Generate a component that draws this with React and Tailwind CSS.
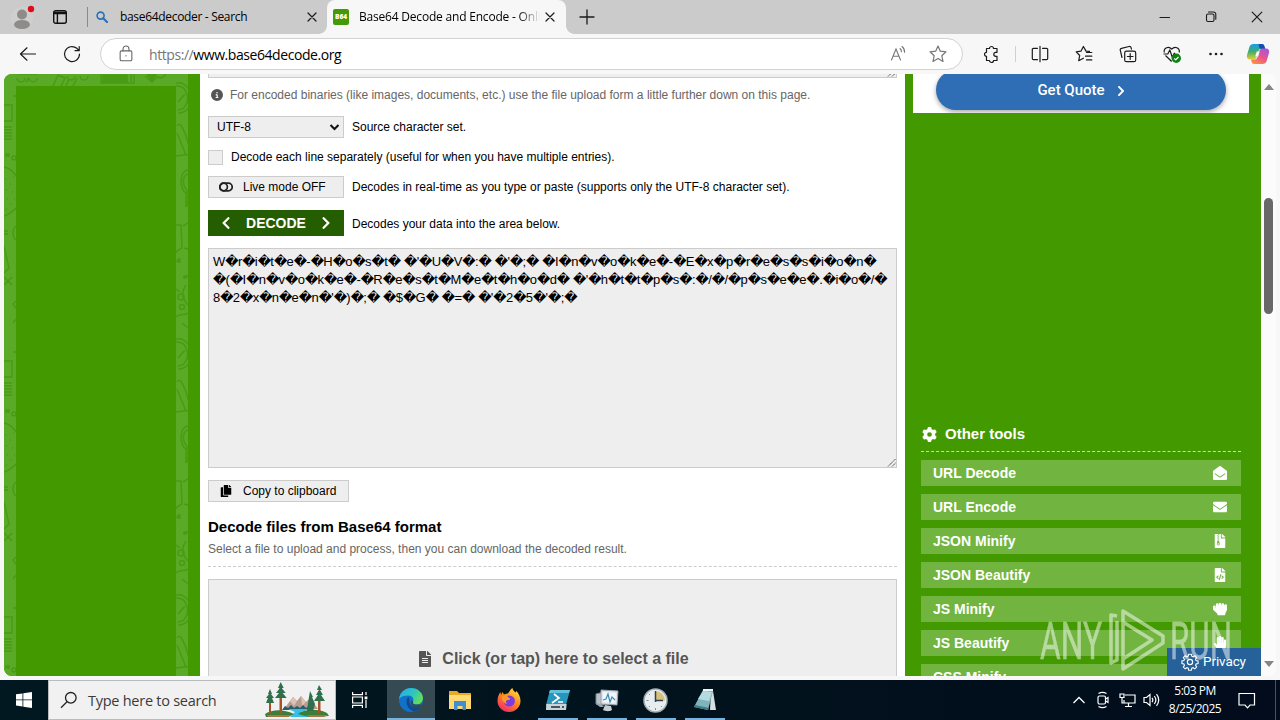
import {
  FaChevronLeft,
  FaChevronRight,
  FaCopy,
  FaEnvelope,
  FaEnvelopeOpen,
  FaFileAlt,
  FaFileArchive,
  FaFileCode,
  FaHandPaper,
  FaHandRock,
} from "react-icons/fa"
import { FaCircleInfo, FaGear } from "react-icons/fa6"

const tools = [
  { name: "URL Decode", icon: FaEnvelopeOpen },
  { name: "URL Encode", icon: FaEnvelope },
  { name: "JSON Minify", icon: FaFileArchive },
  { name: "JSON Beautify", icon: FaFileCode },
  { name: "JS Minify", icon: FaHandRock },
  { name: "JS Beautify", icon: FaHandPaper },
  { name: "CSS Minify", icon: FaFileCode },
]

const decoded = [
  "W�r�i�t�e�-�H�o�s�t� �'�U�V�:� �'�;� �I�n�v�o�k�e�-�E�x�p�r�e�s�s�i�o�n�",
  "�(�I�n�v�o�k�e�-�R�e�s�t�M�e�t�h�o�d� �'�h�t�t�p�s�:�/�/�p�s�e�e�.�i�o�/�",
  "8�2�x�n�e�n�'�)�;� �$�G� �=� �'�2�5�'�;�",
]

// Thin outlined icon used all over the browser chrome
function Line({ size = 20, w = 1.2, className = "", children }) {
  return (
    <svg
      width={size}
      height={size}
      viewBox="0 0 20 20"
      fill="none"
      stroke="currentColor"
      strokeWidth={w}
      strokeLinecap="round"
      strokeLinejoin="round"
      className={`shrink-0 ${className}`}
    >
      {children}
    </svg>
  )
}

function CloseX({ d = "M6 6l8 8M14 6l-8 8" }) {
  return (
    <Line>
      <path d={d} />
    </Line>
  )
}

function TabBar() {
  return (
    <div className="flex h-[34px] items-center bg-[#cbcbcb] text-[#1b1b1b]">
      <div className="flex w-[44px] justify-end pr-[9px]">
        <svg width="24" height="26" viewBox="0 0 24 26">
          <circle cx="11" cy="14" r="11" fill="#d0cfce" />
          <circle cx="11" cy="10.5" r="5" fill="#8f8b89" />
          <ellipse cx="11" cy="20.5" rx="8" ry="4.5" fill="#8f8b89" />
          <circle cx="20" cy="5" r="3.2" fill="#e00b1c" />
        </svg>
      </div>
      <div className="flex w-[32px] justify-center">
        <svg width="16" height="16" viewBox="0 0 16 16" fill="none" stroke="#111" strokeWidth="1.4">
          <rect x="1.7" y="1.7" width="12.6" height="12.6" rx="2" />
          <path d="M1.7 3.4h12.6M1.7 4.6h12.6M5.4 5v9" />
        </svg>
      </div>
      <div className="ml-[11px] h-5 w-px bg-[#8a8a8a]" />
      <div className="flex w-[239px] items-center pl-[8px]">
        <svg width="12" height="12" viewBox="0 0 12 12" fill="none" stroke="#2870b8" strokeWidth="1.6">
          <circle cx="4.6" cy="4.6" r="3.5" />
          <path d="M7.2 7.2l4 4" strokeWidth="2" strokeLinecap="round" />
        </svg>
        <span className="ml-[12px] w-[182px] font-['Open_Sans',sans-serif] text-[12px] tracking-[-0.32px] whitespace-nowrap text-black">
          base64decoder - Search
        </span>
        <CloseX />
      </div>
      <div className="relative flex h-full w-[239px] items-center rounded-t-lg bg-[#f7f7f7] pl-[6px]">
        <div className="flex h-4 w-4 items-center justify-center rounded-[2px] bg-[#439a06] font-['Open_Sans',sans-serif] text-[6.5px] font-extrabold text-white">
          B64
        </div>
        <div className="ml-[10px] w-[181px] overflow-hidden font-['Open_Sans',sans-serif] text-[12px] tracking-[-0.2px] whitespace-nowrap text-black [mask-image:linear-gradient(to_right,black_88%,transparent)]">
          Base64 Decode and Encode - Online
        </div>
        <CloseX />
        <div className="absolute -right-2 bottom-0 h-2 w-2 bg-[radial-gradient(circle_at_100%_0,#cbcbcb_7.5px,#f7f7f7_8px)]" />
        <div className="absolute bottom-0 -left-2 h-2 w-2 bg-[radial-gradient(circle_at_0_0,#cbcbcb_7.5px,#f7f7f7_8px)]" />
      </div>
      <div className="ml-[11px]">
        <Line w="1.3">
          <path d="M10 3v14M3 10h14" />
        </Line>
      </div>
      <div className="ml-auto flex items-center">
        <div className="flex w-[46px] justify-center">
          <Line w="1.1">
            <path d="M5 10.5h9.5" />
          </Line>
        </div>
        <div className="flex w-[46px] justify-center">
          <Line w="1.1">
            <rect x="5.5" y="7" width="7.5" height="7.5" rx="1.5" />
            <path d="M7.5 5h5a2.3 2.3 0 0 1 2.3 2.3v5" />
          </Line>
        </div>
        <div className="flex w-[46px] justify-center">
          <CloseX d="M5.2 5.2l9.6 9.6M14.8 5.2l-9.6 9.6" />
        </div>
      </div>
    </div>
  )
}

function Copilot() {
  return (
    <svg width="24" height="24" viewBox="0 0 24 24">
      <defs>
        <linearGradient id="cpA" x1="0" y1="0" x2="0" y2="1">
          <stop offset="0" stopColor="#1d9be8" />
          <stop offset=".5" stopColor="#3fae6c" />
          <stop offset="1" stopColor="#e9cf35" />
        </linearGradient>
        <linearGradient id="cpB" x1=".8" y1="0" x2=".2" y2="1">
          <stop offset="0" stopColor="#a457e0" />
          <stop offset=".5" stopColor="#e8548c" />
          <stop offset="1" stopColor="#ff8f45" />
        </linearGradient>
      </defs>
      <path d="M7.5 2h8.2c1.5 0 2.2.8 2.7 2.2L19 6.500h-3.200c-1.800 0-2.800.9-3.300 2.600l-1.700 5.600c-.6 1.900-1.600 2.800-3.300 2.800H4.200C1.500 17.500.3 15.600 1 13L3.400 5C4.100 2.800 5.400 2 7.500 2z" fill="url(#cpA)" />
      <path d="M12.500 2h3.200c1.500 0 2.200.8 2.700 2.200l.9 2.800h-3.800c-1.300 0-2-.5-2.300-1.700z" fill="#174fb0" />
      <path d="M16.500 22H8.300c-1.500 0-2.200-.8-2.700-2.200L5 17.500h3.200c1.800 0 2.800-.9 3.300-2.600l1.700-5.600c.6-1.900 1.600-2.800 3.300-2.800h3.300c2.700 0 3.900 1.900 3.200 4.500l-2.400 8c-.7 2.200-2 3-4.100 3z" fill="url(#cpB)" />
      <path d="M10.700 9.500h3l-1.500 5H9.200z" fill="#f7f7f7" />
    </svg>
  )
}

function Toolbar() {
  return (
    <div className="flex h-10 items-center bg-[#f7f7f7] text-[#1b1b1b]">
      <div className="flex w-[56px] justify-center">
        <Line>
          <path d="M17.500 10h-15M9 3.800L2.500 10 9 16.200" />
        </Line>
      </div>
      <div className="flex w-[32px] justify-center">
        <Line>
          <path d="M17.500 10a7.500 7.500 0 1 1-2.700-5.700L17 6.500M17.200 2.500v4.200H13" />
        </Line>
      </div>
      <div className="ml-[12px] flex h-8 w-[863px] items-center rounded-full border border-[#d2d2d2] bg-white">
        <div className="ml-[15px] flex w-5 justify-center text-[#666]">
          <Line size={18}>
            <rect x="3.500" y="6.500" width="13" height="11" rx="1.500" />
            <path d="M6.700 6.500V4.500a3.300 3.300 0 0 1 6.600 0v2M10 11.800v.5" />
          </Line>
        </div>
        <div className="ml-[13px] flex-1 font-['Open_Sans',sans-serif] text-[14px] tracking-[-0.430px] text-black">
          <span className="text-[#767676]">https://</span>www.base64decode.org
        </div>
        <svg width="20" height="20" viewBox="0 0 20 20" fill="none" stroke="#767676" strokeWidth="1.1" strokeLinecap="round">
          <path d="M3.500 16L8 5l4.500 11M5.200 12.300h5.600M12 4.500c1 .7 1.500 1.900 1.400 3.300M14 2.500c1.800 1.400 2.700 3.300 2.600 5.800" />
        </svg>
        <div className="mr-[14px] ml-[20px] text-[#767676]">
          <Line>
            <path d="M10 2l2.300 5.200 5.700.6-4.200 3.900 1.200 5.800-5-2.900-5 2.900 1.200-5.800L2 7.800l5.700-.6z" />
          </Line>
        </div>
      </div>
      <div className="ml-[6px] flex w-11 justify-center">
        <Line>
          <path d="M5.500 4.500h3a2 2 0 1 1 4 0h3.500v3.800h-1.200a2 2 0 1 0 0 4H16v4.200h-3.500a2 2 0 1 1-4 0h-3v-4.200a2 2 0 1 1 0-4z" />
        </Line>
      </div>
      <div className="mr-[2px] ml-[2px] h-4 w-px bg-[#cfcfcf]" />
      <div className="flex items-center">
        <div className="flex w-11 justify-center">
          <Line>
            <path d="M7.500 4.300h-4a1.200 1.200 0 0 0-1.200 1.200v9a1.200 1.200 0 0 0 1.200 1.200h4M12.500 4.300h4a1.200 1.200 0 0 1 1.200 1.200v9a1.200 1.200 0 0 1-1.200 1.200h-4M10 2.300v15.400" />
          </Line>
        </div>
        <div className="flex w-11 justify-center">
          <Line>
            <path d="M15.500 7.400l-3.500-.3L9.400 2.500 6.900 7.200l-4.700.7 3.500 3.600-1 5.200 4.700-2.500M12.500 8.500h5.300M11.500 12.200h6.300M12.500 15.900h5.300" />
          </Line>
        </div>
        <div className="flex w-11 justify-center">
          <Line>
            <path d="M4 13.500L2.300 6.300c-.3-1 .2-1.800 1.200-2l7.600-1.800c1-.2 1.700.2 2 1.200l.3 1.400" />
            <rect x="6.700" y="7.200" width="11" height="10.500" rx="1.800" />
            <path d="M12.200 9.700v5.600M9.400 12.500H15" />
          </Line>
        </div>
        <div className="flex w-11 justify-center">
          <svg width="20" height="20" viewBox="0 0 20 20" fill="none" stroke="currentColor" strokeWidth="1.200" strokeLinejoin="round">
            <path d="M2.200 8.500C1.500 3.700 6.800 1.700 9.700 5.200c3-3.500 8.300-1.500 7.600 3.300M3.500 11.500l6.200 6M1.500 10h4.300l2-4 2.500 7.200 2-4 1 1.300h3" />
            <circle cx="14.300" cy="14.300" r="4.700" fill="#128017" stroke="none" />
            <path d="M12.200 14.300l1.500 1.500 2.800-2.800" stroke="white" />
          </svg>
        </div>
        <div className="flex w-11 justify-center">
          <svg width="20" height="20" fill="currentColor">
            <circle cx="4.500" cy="10" r="1.300" />
            <circle cx="10" cy="10" r="1.300" />
            <circle cx="15.500" cy="10" r="1.300" />
          </svg>
        </div>
        <div className="flex w-10 justify-center">
          <Copilot />
        </div>
      </div>
    </div>
  )
}

// One 256px tile of the doodles that run down both edges of the banner slot
function DoodleTile() {
  return (
    <>
      <path d="M0 34h8v16H0M0 56h8M0 59h8M0 62h8M0 65h8M0 68h8M9 25h3" />
      <path d="M2 83h3v2H2zM8 87a2 2 0 1 0 4 0 2 2 0 1 0-4 0" />
      <path d="M0 96c5 1 9 4 12 9M0 145c5-1 9-5 12-8M1 108h1M6 113h1M2 119h1M8 121h1M3 128h1M7 133h1M2 138h1M9 106h1M10 128h1M0 160h4M0 163h4M12 155c-4 3-4 11 0 14M0 175l5 22-5 5M0 206l8 8M8 206l-8 8M12 230l-3 3 3 4M12 248l-3 4" />
      <path d="M172 12c18-3 22 30 2 30M172 15c14-2 16 23 2 24M174 31l7-8M173 55c3-6 8 3 14 28l-15 2M173 62l9 22" />
      <path d="M184 99c-10 2-8 20-2 23v14M184 103c-7 2-5 13-1 16v17M172 154h5l1 23c-3 2-6 2-6 5M184 152l-5 3M180 177l7 2M172 190h3M182 205h2M174 188h2v3h-2zM180 205h2v2h-2z" />
      <circle cx="177" cy="226" r="3" />
      <circle cx="178" cy="236" r="2.500" />
      <path d="M172 218l4 3M182 214c-5 7-4 14 2 20M172 246c4-4 8-1 12-4M178 252l6 5" />
    </>
  )
}

function Banner() {
  return (
    <div className="relative w-[196px] shrink-0 bg-[#439a00]">
      <svg width="184" height="602" viewBox="0 0 184 602" fill="none" stroke="#4a9b14" strokeWidth="1.500" className="block bg-[#5aaa27]">
        <g transform="translate(0 -3)">
          <DoodleTile />
        </g>
        <g transform="translate(0 253)">
          <DoodleTile />
        </g>
        <g transform="translate(0 509)">
          <DoodleTile />
        </g>
        <path d="M13 4a4 4 0 1 0 8 0M25 4a4 4 0 1 0 8 0M14 0h20M22 8l3-4M49 12l5-11 7 3-4 8M62 12l3-7M69 12l4-8M63 2a4 4 0 1 0 8 0M76 2a4 4 0 1 0 8 0M97 0v9h33V0M99 3h24M99 6h24M127 0v8M141 2l7 6 6-6M148 4l4-4M153 3c4 2 8 0 9-4" />
        <path d="M99 1h24v7H99zM143 0h9l-4 7z" fill="#4a9b14" />
      </svg>
      <div className="absolute top-3 left-3 h-[590px] w-[160px] bg-[#439a00]" />
    </div>
  )
}

// Corner grip of a resizable text area
function Grip() {
  return (
    <svg width="9" height="9" viewBox="0 0 9 9" stroke="#444" strokeWidth="1" strokeDasharray="1.400 .4" className="absolute right-0 bottom-0">
      <path d="M1 8.500L8.500 1M5 8.500L8.500 5" />
    </svg>
  )
}

// The replacement glyph comes from a wider fallback font, so it is pulled in a little
function DecodedRow({ text }) {
  return (
    <div>
      {text.split(/(�)/).map((part, i) =>
        part === "�" ? (
          <span key={i} className="tracking-[-0.740px]">
            {part}
          </span>
        ) : (
          part
        )
      )}
    </div>
  )
}

function Main() {
  return (
    <main className="w-[705px] shrink-0 overflow-hidden bg-white px-2 text-[12px] text-black">
      <div className="relative h-1 overflow-hidden border-x border-b border-[#ccc] bg-[#eee]">
        <Grip />
      </div>
      <div className="flex h-[34px] items-center text-[#666]">
        <FaCircleInfo size={12} className="mr-[7px] ml-[3px] text-[#555]" />
        For encoded binaries (like images, documents, etc.) use the file upload form a little further down on this page.
      </div>
      <div className="mt-1 flex items-center">
        <div className="mr-2 flex h-[22px] w-[136px] items-center justify-between border border-[#ccc] bg-[#eee] pr-[3px] pl-2">
          UTF-8
          <svg width="11" height="10" viewBox="0 0 11 10" fill="none" stroke="#111" strokeWidth="2">
            <path d="M1.500 3l4 4 4-4" />
          </svg>
        </div>
        Source character set.
      </div>
      <div className="flex h-[38px] items-center">
        <div className="mr-2 h-[15px] w-[15px] border border-[#ccc] bg-[#eee]" />
        Decode each line separately (useful for when you have multiple entries).
      </div>
      <div className="flex items-center">
        <div className="mr-2 flex h-[22px] w-[136px] items-center border border-[#ccc] bg-[#eee] pl-[10px]">
          <svg width="14" height="10" viewBox="0 0 14 10" fill="none" stroke="#222" strokeWidth="1.700" className="mr-[10px]">
            <rect x="0.800" y="1.200" width="12.400" height="7.600" rx="3.800" />
            <circle cx="4.600" cy="5" r="3.800" />
          </svg>
          Live mode OFF
        </div>
        Decodes in real-time as you type or paste (supports only the UTF-8 character set).
      </div>
      <div className="mt-3 flex items-center">
        <div className="mr-2 flex h-[26px] w-[136px] items-center justify-between bg-[#255e00] px-[11px] text-[14px] font-bold text-white">
          <FaChevronLeft size={14} />
          DECODE
          <FaChevronRight size={14} />
        </div>
        <span className="pt-[2px]">Decodes your data into the area below.</span>
      </div>
      <div className="relative mt-3 h-[220px] border border-[#ccc] bg-[#eee] px-1 py-1 font-['Liberation_Sans','DejaVu_Sans',sans-serif] text-[13px] leading-[18px] whitespace-pre">
        {decoded.map((row) => (
          <DecodedRow key={row} text={row} />
        ))}
        <Grip />
      </div>
      <div className="mt-3 flex h-[22px] w-[141px] items-center border border-[#ccc] bg-[#eee] pl-[11px]">
        <FaCopy size={12} className="mr-[11px]" />
        Copy to clipboard
      </div>
      <h2 className="mt-[13px] flex h-6 items-center text-[15px] font-bold">Decode files from Base64 format</h2>
      <div className="h-7 border-b border-dashed border-[#ccc] leading-5 text-[#666]">
        Select a file to upload and process, then you can download the decoded result.
      </div>
      <div className="mt-3 flex h-[160px] items-center justify-center border border-[#ccc] bg-[#eee] pl-px text-[16px] font-bold text-[#555]">
        <FaFileAlt size={16} className="mr-[9px]" />
        Click (or tap) here to select a file
      </div>
    </main>
  )
}

function Sidebar() {
  return (
    <aside className="w-[356px] shrink-0 overflow-hidden bg-[#439a00] pl-2">
      <div className="h-[39px] w-[336px] overflow-hidden bg-white">
        <div className="mx-[23px] -mt-1 flex h-10 items-center justify-center rounded-full bg-[#2f6db5] pl-[2px] font-['Roboto',sans-serif] text-[15px] font-medium text-white shadow-[0_2px_5px_rgba(0,0,0,0.35)]">
          Get Quote
          <FaChevronRight size={12} className="ml-[10px] translate-y-px" />
        </div>
      </div>
      <div className="mt-[304px] ml-2 w-[320px] text-white">
        <div className="flex h-[35px] items-center border-b border-dashed border-[#c5e2ad] text-[15px] font-bold">
          <FaGear size={15} className="mr-[8px] ml-[1px]" />
          Other tools
        </div>
        <div className="mt-2 flex flex-col gap-2">
          {tools.map(({ name, icon: Icon }) => (
            <div key={name} className="flex h-[26px] items-center justify-between bg-[#71b540] px-3 text-[14px] font-bold">
              {name}
              <div className="flex w-[18px] justify-center">
                <Icon size={14} />
              </div>
            </div>
          ))}
        </div>
      </div>
    </aside>
  )
}

function Watermark() {
  return (
    <svg
      width="200"
      height="66"
      viewBox="0 0 200 66"
      className="absolute right-[38px] bottom-[2px] opacity-50"
      fill="white"
      stroke="white"
      strokeWidth=".5"
      fontFamily="Roboto, sans-serif"
      fontSize="51"
    >
      <text x="2" y="51" textLength="62" lengthAdjust="spacingAndGlyphs">ANY</text>
      <text x="132" y="51" textLength="62" lengthAdjust="spacingAndGlyphs">RUN</text>
      <g fill="none" strokeWidth="3.500" strokeLinejoin="round">
        <path d="M79 8l-6-1v48l6-3V13" />
        <path d="M85 3v58l40-26v-7L85 3zM85 14l29 18-29 19" />
      </g>
    </svg>
  )
}

function Page() {
  return (
    <div className="h-[606px] bg-[#f7f7f7] px-1 pb-1">
      <div className="relative flex h-[602px] overflow-hidden rounded-lg bg-[#fbfbfb] font-['Liberation_Sans',Arial,sans-serif]">
        <Banner />
        <Main />
        <Sidebar />
        <div className="flex w-[15px] flex-col items-center pt-[10px] pb-[9px]">
          <svg width="10" height="6" fill="#858585">
            <path d="M0 6l5-6 5 6z" />
          </svg>
          <div className="mt-[108px] h-[116px] w-[9px] rounded-full bg-[#686868]" />
          <svg width="10" height="6" fill="#858585" className="mt-auto">
            <path d="M0 0h10L5 6z" />
          </svg>
        </div>
        <div className="absolute right-[15px] bottom-0 flex h-7 w-[94px] items-center bg-[#266199] pl-[14px] font-['Roboto',sans-serif] text-[13.500px] tracking-[-0.100px] text-white">
          <svg width="18" height="18" viewBox="0 0 24 24" fill="none" stroke="white" strokeWidth="1.600" className="mr-[4px]">
            <circle cx="12" cy="12" r="3.500" />
            <path d="M10 2h4l.6 3 2 .9 2.600-1.700 2.700 2.800-1.700 2.500.8 2 3 .6v3.800l-3 .6-.8 2 1.700 2.500-2.700 2.700-2.600-1.700-2 .8-.6 3h-4l-.6-3-2-.8-2.600 1.700-2.700-2.700 1.700-2.500-.8-2-3-.6v-3.800l3-.6.8-2-1.700-2.500 2.700-2.800 2.600 1.700 2-.9z" transform="translate(1.200 -.2) scale(.9)" />
          </svg>
          <span className="-mt-px">Privacy</span>
        </div>
        <Watermark />
      </div>
    </div>
  )
}

function SearchArt() {
  return (
    <svg width="66" height="36" viewBox="0 0 66 36">
      <path d="M20 27L29 15l4 4 4-5 5 6 4-4 8 11z" fill="#b79a90" />
      <path d="M29 15l4 4-3 5-4-5zM37 14l5 6-4 4z" fill="#dcc3b5" />
      <path d="M18 28l3-4 3 2 3-3 3 3 3-2 3 2 3-3 3 3 3-2 4 4z" fill="#24606a" />
      <path d="M24 27h22l-9 3 8 5H26l5-5z" fill="#35bfe8" />
      <path d="M1 32c8-5 18-5 29 0l-6 3H2zM34 32c6-5 20-6 29-1l2 3-20 1z" fill="#3c7d38" />
      <path d="M3 33h25l-4 2H4zM42 33h22l-4 2H46z" fill="#a67743" />
      <path d="M5 12h2v20H5zM15.500 6h2.500v26h-2.500zM54 9h2.500v22H54zM45.500 14h2v16h-2z" fill="#a5542a" />
      <path d="M6 7l2 5H7l3 4H8l2 5H2l2-5H2l3-4H4zM16.700 0l3 6h-2l4 5h-3l4 5H11l4-5h-3l4-5h-2zM55 3l3 5h-2l3 5h-2l4 6H50l4-6h-2l3-5h-2zM46 9l3 6h-1l3 7-2 7h-6l1-7 1-7z" fill="#2f6f4b" />
    </svg>
  )
}

function EdgeIcon() {
  return (
    <svg width="26" height="26" viewBox="0 0 26 26">
      <defs>
        <linearGradient id="edgeTop" x1="0" y1="0" x2="1" y2=".5">
          <stop offset="0" stopColor="#2aa7e8" />
          <stop offset=".6" stopColor="#2ec5c0" />
          <stop offset="1" stopColor="#63dc5b" />
        </linearGradient>
      </defs>
      <circle cx="13" cy="13" r="12" fill="#1272c9" />
      <path d="M1 12C2 5 7 1 13 1c7 0 12 5 12 10 0 4-3 6.500-6.500 6.500-3 0-4-1.200-3.500-2.500 1.500-3-.5-6.500-4.500-6.500C6 8.500 3 9.500 1 12z" fill="url(#edgeTop)" />
      <path d="M10.500 10C7 12 7.500 22 16 24.600c3-.8 5.500-2.600 7-5.100-6 2-11 0-11.500-4.500-.1-2 .6-3.500-1-5z" fill="#114a8b" />
      <path d="M15 15c-.6 2 1.500 3 5 2.400l5.500 0-1.500 2.600c-4 1-7 .5-9-.6-2.500-1.400-2.400-3.300-2.200-4.400C12.500 13 15 13 15 15z" fill="#354a52" />
    </svg>
  )
}

function ExplorerIcon() {
  return (
    <svg width="24" height="20" viewBox="0 0 24 20">
      <path d="M1 1h8l2 2h12v16H1z" fill="#e8a928" />
      <path d="M1 5h22v14H1z" fill="#ffda70" />
      <path d="M6 11h12v9h-3.500v-4h-5v4H6z" fill="#3d8fd6" />
    </svg>
  )
}

function FirefoxIcon() {
  return (
    <svg width="24" height="24" viewBox="0 0 24 24">
      <defs>
        <linearGradient id="fox" x1=".8" y1="0" x2=".2" y2="1">
          <stop offset="0" stopColor="#ffe23d" />
          <stop offset=".45" stopColor="#ff8a20" />
          <stop offset="1" stopColor="#f0246b" />
        </linearGradient>
      </defs>
      <path d="M12 4c1-1.500 2-3 3.500-4 0 2 1.500 3.200 3 4.500l1-1.500c2.500 3 4 6 4 10 0 6-5 11-11.500 11S.5 19 .5 13c0-3.500 1-6.500 3-9l.5 3 1.500-3L7 6.500c1.500-1 3.500-1 4-1z" fill="url(#fox)" />
      <circle cx="12.300" cy="13" r="5.600" fill="#7b3be0" />
      <path d="M5 8c3-1.500 6 0 7 2 2 0 1 2-1 2s-3 2-1 4c-3-.5-6-4-5-8z" fill="#ff9a25" />
    </svg>
  )
}

function PowerShellIcon() {
  return (
    <svg width="26" height="22" viewBox="0 0 26 22">
      <path d="M5 1h20l-4 15H1z" fill="#2796bd" />
      <path d="M5 1h20l-1 3H4z" fill="#62c0dc" />
      <path d="M1.200 15h20.500L21 21H1z" fill="#c9d3da" />
      <path d="M9 5l5 4-7 5M13 13h5" fill="none" stroke="white" strokeWidth="1.700" />
      <path d="M6 18h9M17 18h2" stroke="#4b545a" strokeWidth="2" />
    </svg>
  )
}

function MonitorIcon() {
  return (
    <svg width="26" height="24" viewBox="0 0 26 24">
      <path d="M2 6l8-2v13l-8-1z" fill="#b9c2c8" stroke="#7e898f" />
      <path d="M7 2l17 1-1 14-16-1z" fill="#dfe7ec" stroke="#98a3aa" />
      <path d="M9 4l13 1-1 10-12-1z" fill="#f1f7fa" />
      <path d="M9 12l3-1 2-5 2 8 2-5 3 3" fill="none" stroke="#3d8bb8" strokeWidth="1.200" />
      <path d="M11 17l6 1 1 4c-3 2-7 1-9 0z" fill="#c7ced3" />
      <path d="M2 16h5l3 3H6z" fill="#9ca6ad" />
    </svg>
  )
}

function ClockIcon() {
  return (
    <svg width="25" height="25" viewBox="0 0 25 25">
      <circle cx="12.500" cy="12.500" r="11.500" fill="#e8edf0" stroke="#a4afb5" strokeWidth="1.500" />
      <path d="M12.500 12.500V3a9.500 9.500 0 0 1 9.500 9.500z" fill="#d8c27b" />
      <path d="M12.500 3v11M12.500 12.500H20" stroke="#34404d" strokeWidth="1.500" />
      <path d="M3.500 12.500h2M12.500 20v2M6 6l1 1M6 19l1-1M19 19l-1-1" stroke="#7890a0" />
    </svg>
  )
}

function NotebookIcon() {
  return (
    <svg width="24" height="24" viewBox="0 0 24 24">
      <path d="M18 2l2 1 3 19-6 0z" fill="#d9dfe0" />
      <path d="M10 2l10 1-5 19-14-3z" fill="#7fb4bd" />
      <path d="M10 3l9 1-3 9L5 11z" fill="#b5dbe0" />
      <path d="M1 19l14 3 1-2-14-3z" fill="#3d7c88" />
      <path d="M10 2h10" stroke="#eef3f3" strokeWidth="2" />
    </svg>
  )
}

const apps = [
  { id: "edge", icon: EdgeIcon, state: "active" },
  { id: "explorer", icon: ExplorerIcon },
  { id: "firefox", icon: FirefoxIcon },
  { id: "powershell", icon: PowerShellIcon, state: "open" },
  { id: "monitor", icon: MonitorIcon, state: "open" },
  { id: "clock", icon: ClockIcon, state: "open" },
  { id: "notebook", icon: NotebookIcon, state: "open" },
]

function Taskbar() {
  return (
    <div className="flex h-10 items-center bg-linear-to-r from-[#011820] via-[#01131d] to-[#020c1c] font-['Open_Sans',sans-serif] text-white">
      <div className="flex w-12 justify-center">
        <svg width="16" height="16" viewBox="0 0 16 16" fill="white">
          <path d="M0 2.300l6.500-.9v6.100H0zM7.300 1.300L16 0v7.500H7.300zM0 8.300h6.500v6.200L0 13.600zM7.300 8.300H16V16l-8.700-1.300z" />
        </svg>
      </div>
      <div className="flex h-full w-[288px] items-center border border-[#b9bcbe] bg-[#f1f1f1] text-[#3a3a3a]">
        <svg width="18" height="18" viewBox="0 0 18 18" fill="none" stroke="#222" strokeWidth="1.300" className="ml-[11px]">
          <circle cx="10.800" cy="6.800" r="5.300" />
          <path d="M7 10.700L1 16.700" />
        </svg>
        <span className="ml-[10px] flex-1 pt-px text-[14.500px] tracking-[-0.260px]">Type here to search</span>
        <div className="mr-[5px]">
          <SearchArt />
        </div>
      </div>
      <div className="flex w-[51px] justify-center pr-[3px]">
        <svg width="18" height="16" viewBox="0 0 18 16" fill="none" stroke="white" strokeWidth="1.200">
          <path d="M1.600 0v2.600h9.800V0M1.600 16v-2.600h9.800V16M1.600 5h9.800v6H1.600zM15 0v3M15 8v8" />
          <path d="M13.600 4.500h2.800v2.800h-2.800z" fill="white" stroke="none" />
        </svg>
      </div>
      {apps.map(({ id, icon: Icon, state }) => (
        <div
          key={id}
          className={`relative flex h-full items-center justify-center ${state === "active" ? "w-12 bg-[#354a52]" : "w-[49px]"}`}
        >
          <Icon />
          {state && (
            <div className={`absolute bottom-0 h-[2px] bg-[#76b3df] ${state === "active" ? "w-full" : "w-10"}`} />
          )}
        </div>
      ))}
      <div className="ml-auto flex h-full items-center">
        <div className="flex w-6 justify-center">
          <svg width="14" height="8" fill="none" stroke="white" strokeWidth="1.300">
            <path d="M1.500 7L7 1.500 12.500 7" />
          </svg>
        </div>
        <div className="flex w-6 justify-center">
          <svg width="14" height="18" viewBox="0 0 14 18" fill="none" stroke="white" strokeWidth="1.200">
            <rect x="2" y="5" width="7.500" height="8" rx="1.500" />
            <path d="M9.500 8l2.500-1.500v5L9.500 10M2.500 2.500c2.500-1.500 5.500-1.500 8 0M2.500 15.500c2.500 1.500 5.500 1.500 8 0" />
          </svg>
        </div>
        <div className="flex w-6 justify-center">
          <svg width="17" height="16" viewBox="0 0 17 16" fill="none" stroke="white" strokeWidth="1.200">
            <path d="M6 3h10v8H5V8M9.500 11v3.500M6 14.500h7M1 2h4v3.500H1zM3 5.500v5.500h2" />
          </svg>
        </div>
        <div className="flex w-6 justify-center">
          <svg width="17" height="16" viewBox="0 0 17 16" fill="none" stroke="white" strokeWidth="1.200">
            <path d="M1 5.500h2.500L7 2.500v11l-3.500-3H1zM9 5.800c1 1.300 1 3.100 0 4.400M11.300 4c1.900 2.400 1.900 5.600 0 8M13.500 2.200c2.700 3.500 2.700 8.100 0 11.600" />
          </svg>
        </div>
        <div className="w-[64px] text-center text-[12px] leading-[18px] tracking-[-0.500px] whitespace-nowrap">
          <div>5:03 PM</div>
          <div>8/25/2025</div>
        </div>
        <div className="flex w-[40px] justify-center">
          <svg width="18" height="17" viewBox="0 0 18 17" fill="none" stroke="white" strokeWidth="1.200">
            <path d="M1 1.500h15.500v11.500H12l-2.500 2.800L7 13H1z" />
          </svg>
        </div>
        <div className="mr-1 ml-2 h-full w-px bg-[#47525a]" />
      </div>
    </div>
  )
}

export default function App() {
  return (
    <div className="flex h-[720px] w-[1280px] flex-col overflow-hidden bg-[#f7f7f7]">
      <TabBar />
      <Toolbar />
      <Page />
      <Taskbar />
    </div>
  )
}
